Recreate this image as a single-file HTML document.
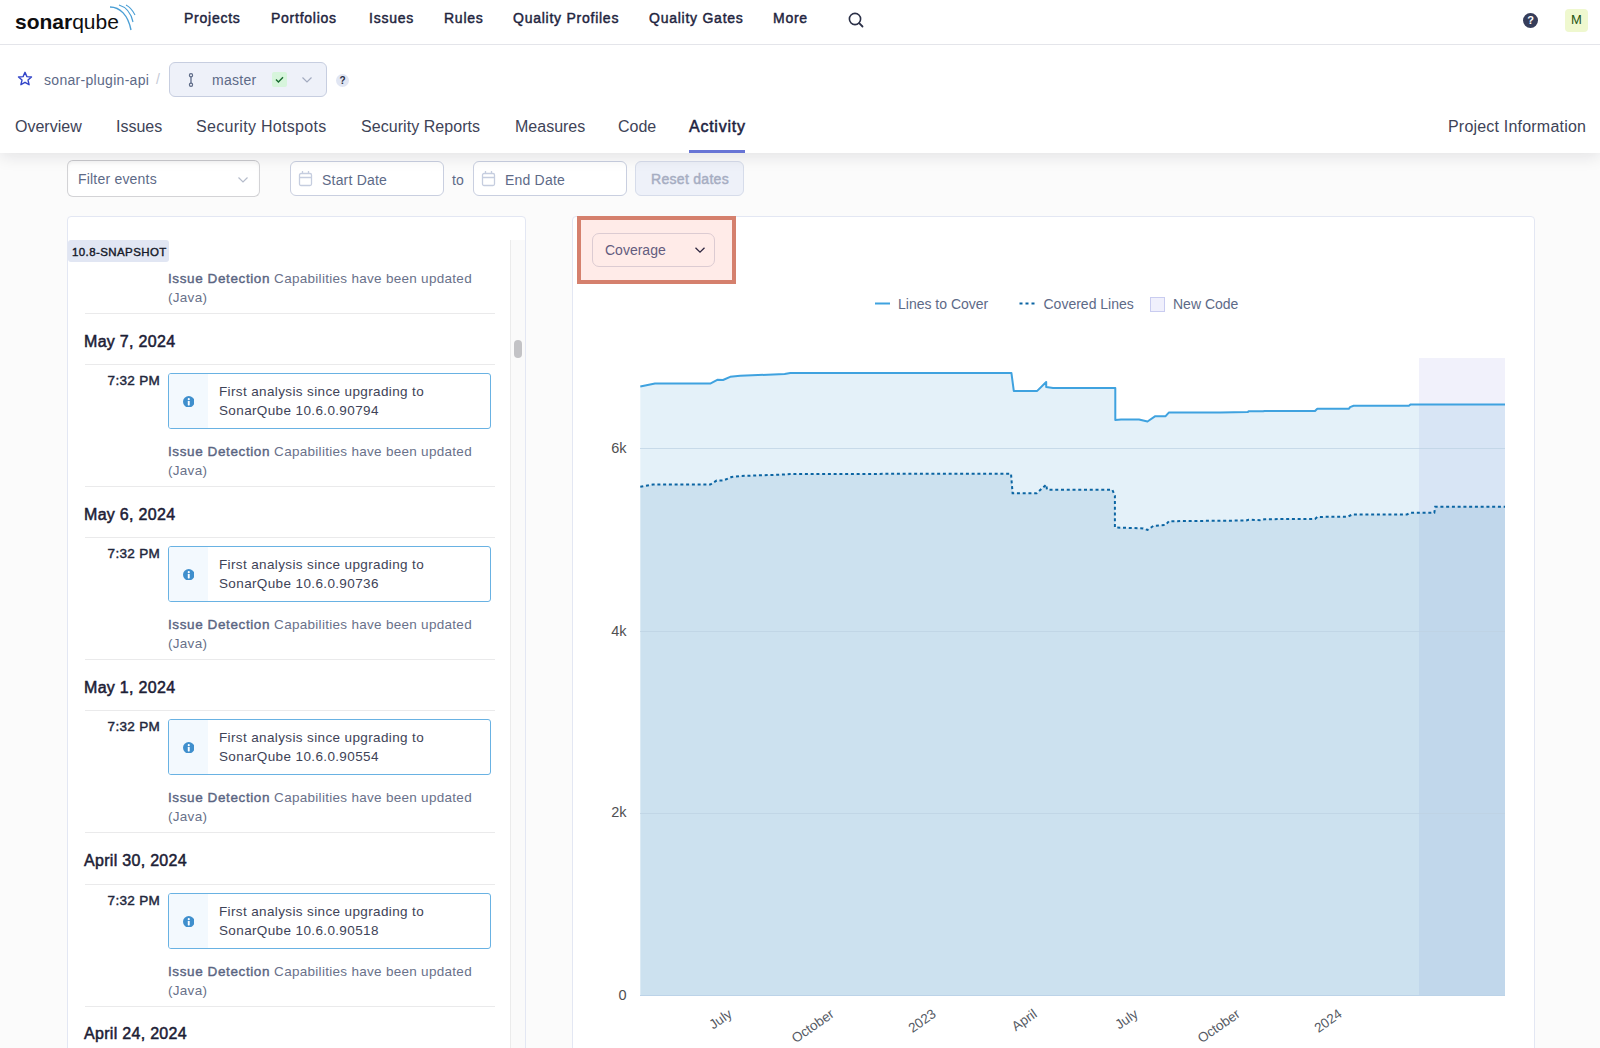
<!DOCTYPE html>
<html><head><meta charset="utf-8">
<style>
*{box-sizing:border-box;margin:0;padding:0}
html,body{width:1600px;height:1048px;overflow:hidden;background:#fbfbfb;font-family:"Liberation Sans",sans-serif;color:#2a2f45}
.a{position:absolute;white-space:nowrap;line-height:1}
#topnav{position:absolute;left:0;top:0;width:1600px;height:45px;background:#fff;border-bottom:1px solid #e4e5ea;z-index:3}
.nav{position:absolute;top:11px;font-size:14px;font-weight:normal;-webkit-text-stroke:0.45px #1f2540;color:#1f2540;line-height:1;letter-spacing:0.75px}
#header{position:absolute;left:0;top:45px;width:1600px;height:108px;background:#fff;box-shadow:0 3px 16px rgba(20,20,40,0.11);z-index:2}
.tab{position:absolute;top:74px;font-size:16px;color:#3e4357;line-height:1}
#main{position:absolute;left:0;top:0;width:1600px;height:1048px}
.inp{position:absolute;top:161px;height:35px;background:#fff;border:1px solid #c9cfe0;border-radius:6px}
.panel{position:absolute;background:#fff;border:1px solid #e3e7f3;border-radius:4px}
.sep{position:absolute;left:85px;width:410px;height:1px;background:#eaeaeb}
.date{position:absolute;left:84px;font-size:16px;font-weight:normal;-webkit-text-stroke:0.5px #1c2035;color:#1c2035;line-height:1;letter-spacing:0.3px}
.time{position:absolute;left:100px;width:60px;text-align:right;font-size:13.5px;font-weight:normal;-webkit-text-stroke:0.45px #22273d;color:#22273d;line-height:1;letter-spacing:0.3px}
.box{position:absolute;left:168px;width:323px;height:56px;border:1px solid #69b2e3;border-radius:3px;background:#fff;overflow:hidden}
.box .ic{position:absolute;left:0;top:0;width:39px;height:54px;background:#f3f9fe}
.box .dot{position:absolute;left:13.5px;top:21.5px;width:11.5px;height:11.5px}
.box .t{position:absolute;left:50px;top:8px;font-size:13.5px;line-height:19px;color:#3e4357;white-space:nowrap;letter-spacing:0.37px}
.det{position:absolute;left:168px;font-size:13.5px;line-height:19px;color:#69718a;white-space:nowrap;letter-spacing:0.29px}
.det b{font-weight:normal;-webkit-text-stroke:0.4px #5a6582;color:#5a6582;letter-spacing:0.6px}
</style></head>
<body>
<div id="topnav">
  <div class="a" style="left:15px;top:10.5px;font-size:21px;color:#0e0e10;letter-spacing:0px"><b>sonar</b>qube</div>
  <svg class="a" style="left:105px;top:2px" width="34" height="30" viewBox="0 0 34 30">
    <path d="M5 5 C15 5 23 13 26 28" fill="none" stroke="#4b9fd5" stroke-width="1.4"/>
    <path d="M14 3 C21 5 26 11 28 20" fill="none" stroke="#4b9fd5" stroke-width="1.2"/>
    <path d="M21 3 C25 5 28 9 30 13" fill="none" stroke="#4b9fd5" stroke-width="1.1"/>
  </svg>
  <div class="nav" style="left:184px">Projects</div>
  <div class="nav" style="left:271px">Portfolios</div>
  <div class="nav" style="left:369px">Issues</div>
  <div class="nav" style="left:444px">Rules</div>
  <div class="nav" style="left:513px">Quality Profiles</div>
  <div class="nav" style="left:649px">Quality Gates</div>
  <div class="nav" style="left:773px">More</div>
  <svg class="a" style="left:847px;top:11px" width="18" height="18" viewBox="0 0 18 18">
    <circle cx="8" cy="8" r="5.6" fill="none" stroke="#2b3047" stroke-width="1.6"/>
    <path d="M12.2 12.2 L15.5 15.5" stroke="#2b3047" stroke-width="1.8" stroke-linecap="round"/>
  </svg>
  <div class="a" style="left:1523px;top:13px;width:15px;height:15px;border-radius:50%;background:#363d5a;color:#fff;font-size:11px;font-weight:bold;text-align:center;line-height:15px">?</div>
  <div class="a" style="left:1565px;top:9px;width:23px;height:23px;border-radius:4px;background:#eff8cf;color:#1f5410;font-size:13px;text-align:center;line-height:21.5px">M</div>
</div>

<div id="header">
  <svg class="a" style="left:17px;top:26px" width="16" height="16" viewBox="0 0 16 16">
    <path d="M8 1.3 L9.9 5.6 L14.5 6 L11 9.1 L12.1 13.7 L8 11.3 L3.9 13.7 L5 9.1 L1.5 6 L6.1 5.6 Z" fill="none" stroke="#3446c9" stroke-width="1.4" stroke-linejoin="round"/>
  </svg>
  <div class="a" style="left:44px;top:28px;font-size:14px;color:#5d6a87;letter-spacing:0.3px">sonar-plugin-api</div>
  <div class="a" style="left:156px;top:27px;font-size:14px;color:#c5cad6">/</div>
  <div class="a" style="left:169px;top:17px;width:158px;height:35px;background:#eef1f9;border:1px solid #c7cee0;border-radius:6px"></div>
  <svg class="a" style="left:186px;top:28px" width="10" height="14" viewBox="0 0 10 14">
    <circle cx="5" cy="2.2" r="1.6" fill="none" stroke="#5d6a87" stroke-width="1.2"/>
    <circle cx="5" cy="11.8" r="1.6" fill="none" stroke="#5d6a87" stroke-width="1.2"/>
    <path d="M5 3.8 V10.2" stroke="#5d6a87" stroke-width="1.3"/>
  </svg>
  <div class="a" style="left:212px;top:28px;font-size:14px;color:#5d6a87;letter-spacing:0.3px">master</div>
  <div class="a" style="left:272px;top:27px;width:15px;height:15px;background:#d7f5dc;border-radius:2px"></div>
  <svg class="a" style="left:274px;top:30px" width="11" height="9" viewBox="0 0 11 9">
    <path d="M2 4.6 L4.4 6.9 L9 2.2" fill="none" stroke="#186b2f" stroke-width="1.4"/>
  </svg>
  <svg class="a" style="left:301px;top:31px" width="12" height="8" viewBox="0 0 12 8">
    <path d="M1.5 1.5 L6 6 L10.5 1.5" fill="none" stroke="#a3abc0" stroke-width="1.2"/>
  </svg>
  <div class="a" style="left:336px;top:29px;width:13px;height:13px;border-radius:50%;background:#e1e6f3;color:#2b3047;font-size:10px;font-weight:bold;text-align:center;line-height:13px">?</div>

  <div class="tab" style="left:15px">Overview</div>
  <div class="tab" style="left:116px">Issues</div>
  <div class="tab" style="left:196px;letter-spacing:0.3px">Security Hotspots</div>
  <div class="tab" style="left:361px;letter-spacing:0.05px">Security Reports</div>
  <div class="tab" style="left:515px">Measures</div>
  <div class="tab" style="left:618px">Code</div>
  <div class="tab" style="left:689px;-webkit-text-stroke:0.5px #1d2240;color:#1d2240;letter-spacing:0.75px">Activity</div>
  <div class="a" style="left:689px;top:105px;width:56px;height:3px;background:#6774d5"></div>
  <div class="tab" style="left:1448px;letter-spacing:0.2px">Project Information</div>
</div>

<div id="main">
  <!-- filters -->
  <div class="inp" style="left:67px;top:160px;height:37px;width:193px;border-color:#d3d3d6;border-top-color:#c9c9cc;box-shadow:inset 0 2px 3px rgba(0,0,0,0.035)"></div>
  <div class="a" style="left:78px;top:172px;font-size:14px;color:#5d6a87;letter-spacing:0.2px">Filter events</div>
  <svg class="a" style="left:237px;top:176px" width="12" height="8" viewBox="0 0 12 8"><path d="M1.5 1.5 L6 6 L10.5 1.5" fill="none" stroke="#b5bccb" stroke-width="1.2"/></svg>

  <div class="inp" style="left:290px;width:154px"></div>
  <svg class="a" style="left:298px;top:170px" width="15" height="17" viewBox="0 0 15 17"><rect x="1.5" y="3.5" width="12" height="12" rx="1.5" fill="none" stroke="#c5cddf" stroke-width="1.3"/><path d="M1.5 7.5 H13.5 M4.5 1 V4 M10.5 1 V4" stroke="#c5cddf" stroke-width="1.3"/></svg>
  <div class="a" style="left:322px;top:173px;font-size:14px;color:#5d6a87;letter-spacing:0.2px">Start Date</div>
  <div class="a" style="left:452px;top:173px;font-size:14px;color:#5d6a87">to</div>
  <div class="inp" style="left:473px;width:154px"></div>
  <svg class="a" style="left:481px;top:170px" width="15" height="17" viewBox="0 0 15 17"><rect x="1.5" y="3.5" width="12" height="12" rx="1.5" fill="none" stroke="#c5cddf" stroke-width="1.3"/><path d="M1.5 7.5 H13.5 M4.5 1 V4 M10.5 1 V4" stroke="#c5cddf" stroke-width="1.3"/></svg>
  <div class="a" style="left:505px;top:173px;font-size:14px;color:#5d6a87;letter-spacing:0.2px">End Date</div>
  <div class="inp" style="left:635px;width:109px;background:#eef1f9;border-color:#d6dcea"></div>
  <div class="a" style="left:651px;top:172px;font-size:14px;-webkit-text-stroke:0.45px #a6adc2;color:#a6adc2;letter-spacing:0.3px">Reset dates</div>

  <!-- left panel -->
  <div class="panel" style="left:67px;top:216px;width:459px;height:900px"></div>
  <div class="a" style="left:510px;top:240px;width:15px;height:808px;background:#fafafa;border-left:1px solid #ebebeb"></div>
  <div class="a" style="left:514px;top:340px;width:8px;height:18px;border-radius:4px;background:#c3c3c6"></div>
  <div class="a" style="left:68px;top:240px;width:101px;height:22px;background:#e1e6f3;border-radius:3px"></div>
  <div class="a" style="left:72px;top:246.5px;font-size:11.5px;-webkit-text-stroke:0.4px #161a2a;color:#161a2a;letter-spacing:0.4px">10.8-SNAPSHOT</div>
  <div class="det" style="top:269px"><b>Issue Detection</b> Capabilities have been updated<br>(Java)</div>
  <div class="sep" style="top:313px"></div>
  <div class="date" style="top:334px">May 7, 2024</div>
  <div class="sep" style="top:364px"></div>
  <div class="time" style="top:374px">7:32 PM</div>
  <div class="box" style="top:373px"><div class="ic"></div><svg class="dot" width="12" height="12" viewBox="0 0 12 12"><circle cx="6" cy="6" r="6" fill="#3f8fcd"/><circle cx="6" cy="3.3" r="1.1" fill="#fff"/><rect x="5" y="5.2" width="2" height="4.6" rx="0.5" fill="#fff"/></svg><div class="t">First analysis since upgrading to<br>SonarQube 10.6.0.90794</div></div>
  <div class="det" style="top:442px"><b>Issue Detection</b> Capabilities have been updated<br>(Java)</div>
  <div class="sep" style="top:486px"></div>
  <div class="date" style="top:507px">May 6, 2024</div>
  <div class="sep" style="top:537px"></div>
  <div class="time" style="top:547px">7:32 PM</div>
  <div class="box" style="top:546px"><div class="ic"></div><svg class="dot" width="12" height="12" viewBox="0 0 12 12"><circle cx="6" cy="6" r="6" fill="#3f8fcd"/><circle cx="6" cy="3.3" r="1.1" fill="#fff"/><rect x="5" y="5.2" width="2" height="4.6" rx="0.5" fill="#fff"/></svg><div class="t">First analysis since upgrading to<br>SonarQube 10.6.0.90736</div></div>
  <div class="det" style="top:615px"><b>Issue Detection</b> Capabilities have been updated<br>(Java)</div>
  <div class="sep" style="top:659px"></div>
  <div class="date" style="top:680px">May 1, 2024</div>
  <div class="sep" style="top:710px"></div>
  <div class="time" style="top:720px">7:32 PM</div>
  <div class="box" style="top:719px"><div class="ic"></div><svg class="dot" width="12" height="12" viewBox="0 0 12 12"><circle cx="6" cy="6" r="6" fill="#3f8fcd"/><circle cx="6" cy="3.3" r="1.1" fill="#fff"/><rect x="5" y="5.2" width="2" height="4.6" rx="0.5" fill="#fff"/></svg><div class="t">First analysis since upgrading to<br>SonarQube 10.6.0.90554</div></div>
  <div class="det" style="top:788px"><b>Issue Detection</b> Capabilities have been updated<br>(Java)</div>
  <div class="sep" style="top:832px"></div>
  <div class="date" style="top:853px">April 30, 2024</div>
  <div class="sep" style="top:884px"></div>
  <div class="time" style="top:894px">7:32 PM</div>
  <div class="box" style="top:893px"><div class="ic"></div><svg class="dot" width="12" height="12" viewBox="0 0 12 12"><circle cx="6" cy="6" r="6" fill="#3f8fcd"/><circle cx="6" cy="3.3" r="1.1" fill="#fff"/><rect x="5" y="5.2" width="2" height="4.6" rx="0.5" fill="#fff"/></svg><div class="t">First analysis since upgrading to<br>SonarQube 10.6.0.90518</div></div>
  <div class="det" style="top:962px"><b>Issue Detection</b> Capabilities have been updated<br>(Java)</div>
  <div class="sep" style="top:1006px"></div>
  <div class="date" style="top:1026px">April 24, 2024</div>
  <!-- chart -->
  <div class="panel" style="left:572px;top:216px;width:963px;height:900px"></div>
  <div class="a" style="left:577px;top:216px;width:159px;height:68px;border:4px solid #d5806d;background:#ffebe8;z-index:2"></div>
  <div class="a" style="left:592px;top:233px;width:123px;height:34px;border:1px solid #dccbd2;border-radius:7px;z-index:2"></div>
  <div class="a" style="left:605px;top:243px;font-size:14px;color:#645c7e;z-index:2">Coverage</div>
  <svg class="a" style="left:694px;top:246px;z-index:2" width="12" height="8" viewBox="0 0 12 8"><path d="M1.5 1.8 L6 6.2 L10.5 1.8" fill="none" stroke="#2e2640" stroke-width="1.3"/></svg>
  <svg class="a" style="left:0;top:0;z-index:1" width="1600" height="1048" viewBox="0 0 1600 1048">
<rect x="1419" y="358" width="86" height="637" fill="#f1f1fb"/>
<path d="M640.3 386.5 L655.0 383.6 L710.2 383.6 L717.3 379.8 L723.0 380.0 L730.2 376.8 L740.2 375.8 L784.6 374.0 L790.3 373.0 L1011.4 372.9 L1013.8 390.9 L1037.2 390.9 L1046.2 382.0 L1046.2 387.0 L1053.0 388.0 L1115.3 388.0 L1115.3 420.1 L1121.0 419.6 L1139.0 419.6 L1147.5 421.5 L1155.3 416.2 L1165.6 416.2 L1169.0 412.4 L1220.4 412.5 L1247.9 412.0 L1248.6 411.3 L1263.0 411.3 L1264.7 411.0 L1315.0 411.0 L1317.3 408.7 L1349.0 408.7 L1350.0 407.1 L1353.6 405.8 L1408.9 405.8 L1410.7 404.4 L1505.0 404.4 L1505 995 L640.3 995 Z" fill="#4b9fd5" fill-opacity="0.15"/>
<path d="M640.3 486.7 L653.0 484.6 L710.2 484.6 L716.6 480.6 L723.0 480.6 L731.6 477.0 L740.2 476.0 L784.6 474.5 L790.3 474.0 L1011.0 473.7 L1012.6 493.2 L1036.7 493.2 L1046.2 484.6 L1047.0 489.7 L1112.3 489.7 L1114.9 495.7 L1114.9 527.5 L1143.2 528.4 L1147.5 530.0 L1153.5 525.8 L1165.6 525.0 L1169.0 521.2 L1246.3 520.5 L1248.6 519.7 L1260.0 520.2 L1264.7 519.2 L1315.0 518.9 L1317.3 516.9 L1347.3 516.8 L1352.7 514.4 L1407.0 514.4 L1410.7 512.8 L1434.3 512.8 L1435.2 506.8 L1505.0 506.8 L1505 995 L640.3 995 Z" fill="#4489b8" fill-opacity="0.15"/>
<line x1="640" x2="1505" y1="448.5" y2="448.5" stroke="#bdd2e3" stroke-opacity="0.75" stroke-width="1"/>
<line x1="640" x2="1505" y1="631.5" y2="631.5" stroke="#bdd2e3" stroke-opacity="0.75" stroke-width="1"/>
<line x1="640" x2="1505" y1="813.5" y2="813.5" stroke="#bdd2e3" stroke-opacity="0.75" stroke-width="1"/>
<line x1="640" x2="1505" y1="995.5" y2="995.5" stroke="#bcd3e8" stroke-width="1"/>
<path d="M640.3 386.5 L655.0 383.6 L710.2 383.6 L717.3 379.8 L723.0 380.0 L730.2 376.8 L740.2 375.8 L784.6 374.0 L790.3 373.0 L1011.4 372.9 L1013.8 390.9 L1037.2 390.9 L1046.2 382.0 L1046.2 387.0 L1053.0 388.0 L1115.3 388.0 L1115.3 420.1 L1121.0 419.6 L1139.0 419.6 L1147.5 421.5 L1155.3 416.2 L1165.6 416.2 L1169.0 412.4 L1220.4 412.5 L1247.9 412.0 L1248.6 411.3 L1263.0 411.3 L1264.7 411.0 L1315.0 411.0 L1317.3 408.7 L1349.0 408.7 L1350.0 407.1 L1353.6 405.8 L1408.9 405.8 L1410.7 404.4 L1505.0 404.4" fill="none" stroke="#3fa2df" stroke-width="2" stroke-linejoin="round"/>
<path d="M640.3 486.7 L653.0 484.6 L710.2 484.6 L716.6 480.6 L723.0 480.6 L731.6 477.0 L740.2 476.0 L784.6 474.5 L790.3 474.0 L1011.0 473.7 L1012.6 493.2 L1036.7 493.2 L1046.2 484.6 L1047.0 489.7 L1112.3 489.7 L1114.9 495.7 L1114.9 527.5 L1143.2 528.4 L1147.5 530.0 L1153.5 525.8 L1165.6 525.0 L1169.0 521.2 L1246.3 520.5 L1248.6 519.7 L1260.0 520.2 L1264.7 519.2 L1315.0 518.9 L1317.3 516.9 L1347.3 516.8 L1352.7 514.4 L1407.0 514.4 L1410.7 512.8 L1434.3 512.8 L1435.2 506.8 L1505.0 506.8" fill="none" stroke="#0b65a3" stroke-width="2" stroke-dasharray="3 2.75"/>
<text x="626.5" y="453" text-anchor="end" font-size="14.5" fill="#505052" font-family="Liberation Sans">6k</text>
<text x="626.5" y="635.5" text-anchor="end" font-size="14.5" fill="#505052" font-family="Liberation Sans">4k</text>
<text x="626.5" y="817" text-anchor="end" font-size="14.5" fill="#505052" font-family="Liberation Sans">2k</text>
<text x="626.5" y="1000" text-anchor="end" font-size="14.5" fill="#505052" font-family="Liberation Sans">0</text>
<text x="733" y="1016" text-anchor="end" font-size="13.5" fill="#555a64" font-family="Liberation Sans" transform="rotate(-35 733 1016)">July</text>
<text x="835" y="1016" text-anchor="end" font-size="13.5" fill="#555a64" font-family="Liberation Sans" transform="rotate(-35 835 1016)">October</text>
<text x="937" y="1016" text-anchor="end" font-size="13.5" fill="#555a64" font-family="Liberation Sans" transform="rotate(-35 937 1016)">2023</text>
<text x="1038" y="1016" text-anchor="end" font-size="13.5" fill="#555a64" font-family="Liberation Sans" transform="rotate(-35 1038 1016)">April</text>
<text x="1139" y="1016" text-anchor="end" font-size="13.5" fill="#555a64" font-family="Liberation Sans" transform="rotate(-35 1139 1016)">July</text>
<text x="1241" y="1016" text-anchor="end" font-size="13.5" fill="#555a64" font-family="Liberation Sans" transform="rotate(-35 1241 1016)">October</text>
<text x="1343" y="1016" text-anchor="end" font-size="13.5" fill="#555a64" font-family="Liberation Sans" transform="rotate(-35 1343 1016)">2024</text>
<line x1="875" x2="890" y1="303.5" y2="303.5" stroke="#3fa2df" stroke-width="2"/>
<line x1="1019.5" x2="1036" y1="303.5" y2="303.5" stroke="#0b65a3" stroke-width="2" stroke-dasharray="3 3"/>
<rect x="1150.5" y="297.5" width="14" height="14" fill="#f0f0fc" stroke="#c9ccf0" stroke-width="1"/>
<text x="898" y="308.8" font-size="14" fill="#5d6a87" font-family="Liberation Sans">Lines to Cover</text>
<text x="1043.5" y="308.8" font-size="14" fill="#5d6a87" font-family="Liberation Sans">Covered Lines</text>
<text x="1173" y="308.8" font-size="14" fill="#5d6a87" font-family="Liberation Sans">New Code</text>
</svg>
</div>
</body></html>
